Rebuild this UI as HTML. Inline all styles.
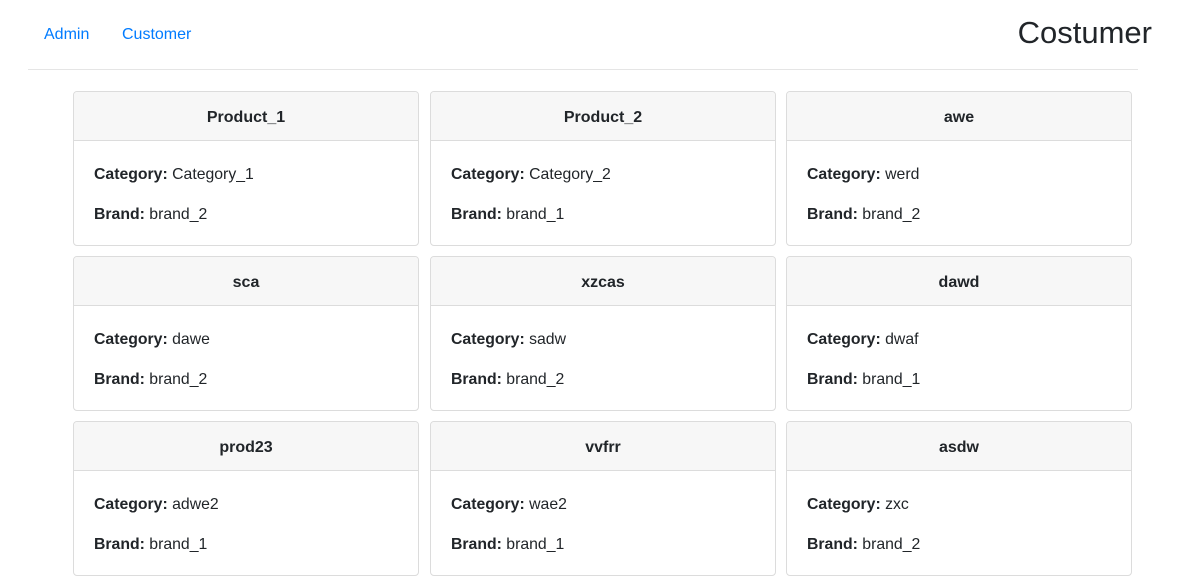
<!DOCTYPE html>
<html><head><style>
body{margin:0;width:1187px;height:584px;background:#fff;font-family:"Liberation Sans",sans-serif;color:#212529;position:relative;overflow:hidden}
a{color:#007bff;text-decoration:none;font-size:16px;position:absolute;top:25px;line-height:19px}
h1{position:absolute;right:35px;top:14px;margin:0;font-size:31px;font-weight:400;line-height:38px}
.hr{position:absolute;left:28px;top:69px;width:1110px;height:1px;background:#e5e5e5}
.card{position:absolute;width:344px;height:153px;border:1px solid #dcdcdc;border-radius:4px;overflow:hidden}
.hd{height:48px;background:#f7f7f7;border-bottom:1px solid #dcdcdc;text-align:center;font-weight:bold;font-size:16px;line-height:52px}
.bd{padding:0 20px;font-size:15.8px}
.bd p{margin:0;line-height:20px}
.bd p.c{margin-top:24px}
.bd p.b{margin-top:20px}
</style></head><body>
<a style="left:44px">Admin</a><a style="left:122px">Customer</a>
<h1>Costumer</h1>
<div class="hr"></div>
<div class="card" style="left:73px;top:91px"><div class="hd">Product_1</div><div class="bd"><p class="c"><b>Category:</b> Category_1</p><p class="b"><b>Brand:</b> brand_2</p></div></div>
<div class="card" style="left:430px;top:91px"><div class="hd">Product_2</div><div class="bd"><p class="c"><b>Category:</b> Category_2</p><p class="b"><b>Brand:</b> brand_1</p></div></div>
<div class="card" style="left:786px;top:91px"><div class="hd">awe</div><div class="bd"><p class="c"><b>Category:</b> werd</p><p class="b"><b>Brand:</b> brand_2</p></div></div>
<div class="card" style="left:73px;top:256px"><div class="hd">sca</div><div class="bd"><p class="c"><b>Category:</b> dawe</p><p class="b"><b>Brand:</b> brand_2</p></div></div>
<div class="card" style="left:430px;top:256px"><div class="hd">xzcas</div><div class="bd"><p class="c"><b>Category:</b> sadw</p><p class="b"><b>Brand:</b> brand_2</p></div></div>
<div class="card" style="left:786px;top:256px"><div class="hd">dawd</div><div class="bd"><p class="c"><b>Category:</b> dwaf</p><p class="b"><b>Brand:</b> brand_1</p></div></div>
<div class="card" style="left:73px;top:421px"><div class="hd">prod23</div><div class="bd"><p class="c"><b>Category:</b> adwe2</p><p class="b"><b>Brand:</b> brand_1</p></div></div>
<div class="card" style="left:430px;top:421px"><div class="hd">vvfrr</div><div class="bd"><p class="c"><b>Category:</b> wae2</p><p class="b"><b>Brand:</b> brand_1</p></div></div>
<div class="card" style="left:786px;top:421px"><div class="hd">asdw</div><div class="bd"><p class="c"><b>Category:</b> zxc</p><p class="b"><b>Brand:</b> brand_2</p></div></div>
</body></html>
